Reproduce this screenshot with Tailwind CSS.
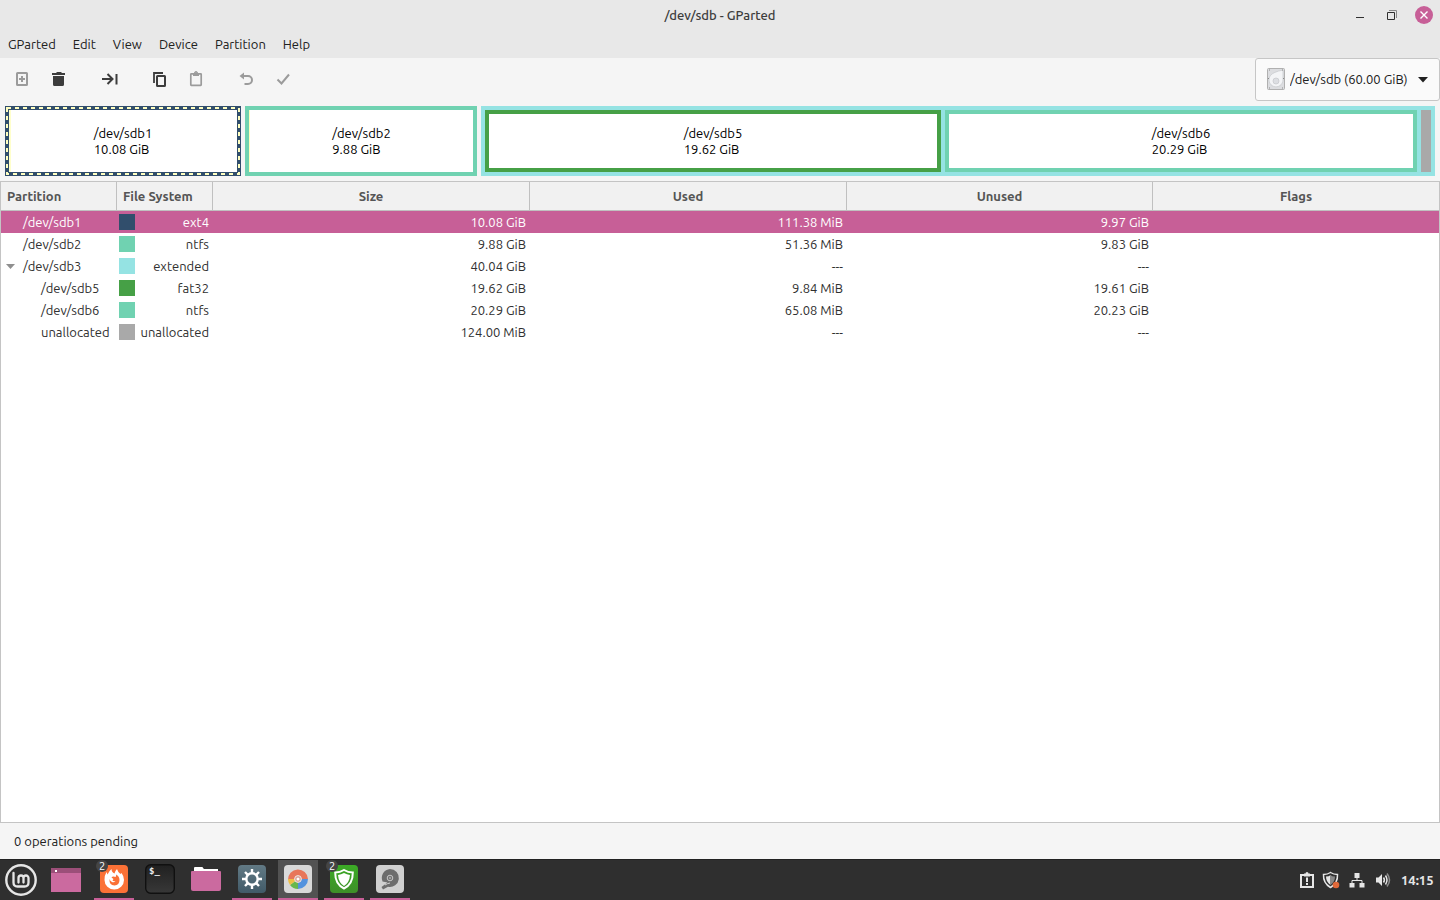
<!DOCTYPE html>
<html lang="en">
<head>
<meta charset="utf-8">
<title>/dev/sdb - GParted</title>
<script src="https://cdn.jsdelivr.net/npm/@tailwindcss/browser@4"></script>
</head>
<body class="flex h-screen flex-col overflow-hidden bg-[#f5f5f5] font-['Ubuntu','Noto_Sans',sans-serif] text-[13px] leading-4 text-[#202020]">

<header class="grid h-[30px] shrink-0 grid-cols-[1fr_auto_1fr] items-center bg-[#e8e8e8]">
  <span></span>
  <h1 class="font-medium text-[#3c3c3c]">/dev/sdb - GParted</h1>
  <div class="flex items-center justify-end gap-[14px] pr-[7px]">
    <button aria-label="Minimize" class="h-[18px] w-[18px]"><svg viewBox="0 0 18 18" class="block"><path d="M5 11.500h8" stroke="#303030" fill="none"/></svg></button>
    <button aria-label="Restore" class="h-[18px] w-[18px]"><svg viewBox="0 0 18 18" class="block"><path d="M6 4.500h7.500V12" stroke="#8a8a8a" fill="none"/><path d="M4.500 6.500h7v7h-7z" stroke="#303030" fill="none"/></svg></button>
    <button aria-label="Close" class="h-[18px] w-[18px] rounded-full bg-[#c75f97]"><svg viewBox="0 0 18 18" class="block"><path d="M5.500 5.500l7 7m0-7l-7 7" stroke="#fff" stroke-width="1.400" fill="none"/></svg></button>
  </div>
</header>

<nav class="flex h-7 shrink-0 items-center gap-[17px] bg-[#e8e8e8] px-2">
  <button>GParted</button><button>Edit</button><button>View</button><button>Device</button><button>Partition</button><button>Help</button>
</nav>

<div class="flex h-[43px] shrink-0 items-center justify-between pl-[14px]">
  <div class="flex items-center gap-5 pb-0.5 text-[#3c3c3c]">
    <button aria-label="New" class="text-[#9b9b9b]"><svg width="16" height="16" viewBox="0 0 16 16" fill="none" stroke="currentColor" stroke-width="2"><rect x="3" y="2" width="10" height="12" rx=".5"/><path d="M5 8h6M8 5v6"/></svg></button>
    <button aria-label="Delete"><svg width="17" height="16" viewBox="0 0 17 16" fill="currentColor"><path d="M2 2h4l1-1h4l1 1h3v2H2zM3 5h11v8.500q0 1.500-1.500 1.500h-8Q3 15 3 13.500z"/></svg></button>
    <button aria-label="Resize/Move" class="ml-[14px]"><svg width="17" height="16" viewBox="0 0 17 16" fill="none" stroke="currentColor" stroke-width="2"><path d="M1 8h10M6.500 3l5 5-5 5M15.500 3v10.500"/></svg></button>
    <button aria-label="Copy" class="ml-[14px]"><svg width="16" height="16" viewBox="0 0 16 16" fill="none" stroke="currentColor" stroke-width="2"><path d="M2 12V2h9" stroke-width="1.800"/><rect x="5" y="5" width="8" height="10" rx=".5"/></svg></button>
    <button aria-label="Paste" class="text-[#9b9b9b]"><svg width="16" height="16" viewBox="0 0 16 16" fill="none" stroke="currentColor" stroke-width="1.700"><rect x="2.800" y="2.800" width="10.400" height="11.500" rx=".5"/><path d="M5 2h1.500a1.700 1.700 0 0 1 3 0H11v3H5z" fill="currentColor" stroke="none"/><circle cx="8" cy="2" r="1.500" stroke-width="1"/></svg></button>
    <button aria-label="Undo" class="ml-[14px] text-[#9b9b9b]"><svg width="16" height="16" viewBox="0 0 16 16" fill="none" stroke="currentColor" stroke-width="2"><path d="M4 5h6a4 4 0 0 1 0 8H6.500"/><path d="M6 1.500V8.500L1.500 5z" fill="currentColor" stroke="none"/></svg></button>
    <button aria-label="Apply" class="text-[#9b9b9b]"><svg width="18" height="16" viewBox="0 0 18 16" fill="none" stroke="currentColor" stroke-width="2"><path d="M3.500 8.500l4 4 7.500-9"/></svg></button>
  </div>
  <div class="relative h-[43px] w-[185px]">
    <select aria-label="Device" class="block h-full w-full appearance-none rounded-[3px] border border-[#c6c6c6] bg-[#fafafa] pr-6 pb-0.5 pl-[34px]"><option>/dev/sdb (60.00 GiB)</option></select>
    <svg class="pointer-events-none absolute top-[10px] left-[11px]" width="20" height="22" viewBox="0 0 20 22"><rect x="1.500" y=".5" width="17" height="21" rx="1" fill="#dcdde0" stroke="#b0b0b0"/><path d="M17 2v10a7 7 0 1 1-12.500-4.500Q7 4 17 2z" fill="#f3f4f6" stroke="#c6c8cc" stroke-width=".7"/><circle cx="10" cy="13" r="3" fill="#dcdee2" stroke="#c4c6ca" stroke-width=".7"/><path d="M3 2h1M16 2h1M3 20h1M16 20h1M2 10.500h1M17 10.500h1" stroke="#8b8b8b"/></svg>
    <svg class="pointer-events-none absolute top-[19px] right-3" width="10" height="6" viewBox="0 0 10 6"><path d="M0 0h10L5 5.500z" fill="#202020"/></svg>
  </div>
</div>

<section aria-label="Partition layout" class="mx-[5px] mt-[5px] flex h-[70px] shrink-0 gap-1 text-black">
  <div class="relative flex flex-[228] items-center justify-center border-4 border-[#314e6c] bg-white">
    <svg class="absolute -inset-0.5 h-[66px] w-[calc(100%+4px)] overflow-visible" fill="none"><path d="M3 2v62" stroke="#ffffcc" stroke-width="2"/><rect width="100%" height="100%" stroke="#ffffc0" stroke-width="2" stroke-dasharray="4 4"/></svg>
    <p>/dev/sdb1<br>10.08 GiB</p>
  </div>
  <div class="flex flex-[224] items-center border-4 border-[#70d2b1] bg-white"><i class="h-full w-px bg-[#ffffc0]"></i><p class="mx-auto">/dev/sdb2<br>9.88 GiB</p></div>
  <div class="flex flex-[946] gap-1 border-4 border-[#95e3e3] bg-[#95e3e3]">
    <div class="flex flex-[448] items-center justify-center border-4 border-[#46a046] bg-white"><p>/dev/sdb5<br>19.62 GiB</p></div>
    <div class="flex flex-[464] items-center justify-center border-4 border-[#70d2b1] bg-white"><p>/dev/sdb6<br>20.29 GiB</p></div>
    <div class="w-[10px] bg-[#a9a9a9]"></div>
  </div>
</section>

<main class="mt-[5px] min-h-0 flex-1 border border-[#c4c4c4] bg-white">
  <table class="w-full table-fixed border-separate border-spacing-0 text-right text-[#303030]">
    <colgroup><col class="w-[116px]"><col class="w-[96px]"><col class="w-[317px]"><col class="w-[317px]"><col class="w-[306px]"><col></colgroup>
    <thead>
      <tr class="h-[29px] bg-[#f1f1f1] text-center text-[#555]">
        <th class="border-r border-b border-[#c0c0c0] pl-1.5 text-left">Partition</th>
        <th class="border-r border-b border-[#c0c0c0] pl-1.5 text-left whitespace-nowrap">File System</th>
        <th class="border-r border-b border-[#c0c0c0]">Size</th>
        <th class="border-r border-b border-[#c0c0c0]">Used</th>
        <th class="border-r border-b border-[#c0c0c0]">Unused</th>
        <th class="border-b border-[#c0c0c0]">Flags</th>
      </tr>
    </thead>
    <tbody>
      <tr class="h-[22px] bg-[#c75f97] text-white">
        <td class="pl-[22px] text-left">/dev/sdb1</td>
        <td class="pr-1 pl-0.5"><div class="flex items-center justify-between"><i class="h-4 w-4 shrink-0 bg-[#314e6c]"></i>ext4</div></td>
        <td class="pr-1">10.08 GiB</td><td class="pr-1">111.38 MiB</td><td class="pr-1">9.97 GiB</td><td></td>
      </tr>
      <tr class="h-[22px]">
        <td class="pl-[22px] text-left">/dev/sdb2</td>
        <td class="pr-1 pl-0.5"><div class="flex items-center justify-between"><i class="h-4 w-4 shrink-0 bg-[#70d2b1]"></i>ntfs</div></td>
        <td class="pr-1">9.88 GiB</td><td class="pr-1">51.36 MiB</td><td class="pr-1">9.83 GiB</td><td></td>
      </tr>
      <tr class="h-[22px]">
        <td class="pl-[5px] text-left"><div class="flex items-center gap-2"><svg width="9" height="5" viewBox="0 0 9 5"><path d="M0 0h9L4.500 5z" fill="#8f8f8f"/></svg>/dev/sdb3</div></td>
        <td class="pr-1 pl-0.5"><div class="flex items-center justify-between"><i class="h-4 w-4 shrink-0 bg-[#95e3e3]"></i>extended</div></td>
        <td class="pr-1">40.04 GiB</td><td class="pr-1">---</td><td class="pr-1">---</td><td></td>
      </tr>
      <tr class="h-[22px]">
        <td class="pl-10 text-left">/dev/sdb5</td>
        <td class="pr-1 pl-0.5"><div class="flex items-center justify-between"><i class="h-4 w-4 shrink-0 bg-[#46a046]"></i>fat32</div></td>
        <td class="pr-1">19.62 GiB</td><td class="pr-1">9.84 MiB</td><td class="pr-1">19.61 GiB</td><td></td>
      </tr>
      <tr class="h-[22px]">
        <td class="pl-10 text-left">/dev/sdb6</td>
        <td class="pr-1 pl-0.5"><div class="flex items-center justify-between"><i class="h-4 w-4 shrink-0 bg-[#70d2b1]"></i>ntfs</div></td>
        <td class="pr-1">20.29 GiB</td><td class="pr-1">65.08 MiB</td><td class="pr-1">20.23 GiB</td><td></td>
      </tr>
      <tr class="h-[22px]">
        <td class="pl-10 text-left">unallocated</td>
        <td class="pr-1 pl-0.5"><div class="flex items-center justify-between"><i class="h-4 w-4 shrink-0 bg-[#a9a9a9]"></i>unallocated</div></td>
        <td class="pr-1">124.00 MiB</td><td class="pr-1">---</td><td class="pr-1">---</td><td></td>
      </tr>
    </tbody>
  </table>
</main>

<p class="flex h-9 shrink-0 items-center px-[14px]">0 operations pending</p>

<footer class="flex h-[41px] shrink-0 items-stretch justify-between border-t border-[#222] bg-[#2f2f2f] text-white">
  <div class="flex">
    <button aria-label="Menu" class="ml-[5px] flex w-8 items-center justify-center">
      <svg width="32" height="32" viewBox="0 0 32 32" fill="none" stroke="#e6e6e6"><circle cx="16" cy="16" r="14.700" stroke-width="2.400"/><path d="M8.500 9v9.500q0 4 4 4h7q4 0 4-4V14a2.500 2.500 0 0 0-5 0v4.500M18.500 14a2.500 2.500 0 0 0-5 0v4.500" stroke-width="2.300" stroke-linecap="round"/></svg>
    </button>
    <button aria-label="Show desktop" class="ml-[9px] flex w-10 items-center justify-center">
      <svg width="30" height="24" viewBox="0 0 30 24"><path d="M0 0h30v24H0z" fill="#cb6a9f"/><path d="M0 0h30v5H0z" fill="#9c4f79"/><path d="M4 2h2v2H4z" fill="#fff"/></svg>
    </button>
    <div class="ml-2 flex gap-1.5">
      <button aria-label="Firefox, 2 windows" class="relative flex w-10 items-center justify-center border-b-2 border-[#c75f97]">
        <svg width="28" height="28" viewBox="0 0 28 28"><rect width="28" height="28" rx="4" fill="#fb7136"/><path d="M4.500 15Q4.500 10 6.500 7l1 2.500Q9 6 11.500 4q0 3 3 4.500Q15 6 17 4q.5 2.500 3.500 5l1-1Q24 11 24 15a9.700 9.500 0 0 1-19.500 0z" fill="#fff"/><path d="M9.500 14q-.5 6 5 6.500 5-.5 5-5.500 0-4-3.500-5.500.5 1.500-.5 2.500-3-1-4 .5l2 1.500-1 1.500q1 1 3 .5-1.500 2-3.500 1Q10 16 9.500 14z" fill="#fb7136"/></svg>
        <span class="absolute top-0 left-0.5 h-3 w-3 rounded-full bg-[#454545] text-center text-[11px] leading-3">2</span>
      </button>
      <button aria-label="Terminal" class="flex w-10 items-center justify-center pb-0.5">
        <svg width="30" height="30" viewBox="0 0 30 30"><defs><linearGradient id="term" x2="0" y2="1"><stop stop-color="#202020"/><stop offset="1" stop-color="#383838"/></linearGradient></defs><rect x=".7" y=".7" width="28.600" height="28.600" rx="5" fill="url(#term)" stroke="#101010" stroke-width="1.400"/><text x="4" y="10" font-family="DejaVu Sans Mono, monospace" font-size="9" font-weight="bold" fill="#eee">$_</text></svg>
      </button>
      <button aria-label="Files" class="flex w-10 items-center justify-center pb-0.5">
        <svg width="30" height="26" viewBox="0 0 30 26"><path d="M3 5V2q0-1 1-1h7q1 0 1 1l1 1h14v4H3z" fill="#fff"/><path d="M0 6q0-1 1-1h28q1 0 1 1v17q0 2-2 2H2q-2 0-2-2z" fill="#cb6a9f"/></svg>
      </button>
      <button aria-label="System settings" class="flex w-10 items-center justify-center border-b-2 border-[#c75f97]">
        <svg width="28" height="28" viewBox="0 0 28 28"><defs><linearGradient id="set" x2="0" y2="1"><stop stop-color="#627a85"/><stop offset="1" stop-color="#415a68"/></linearGradient></defs><rect width="28" height="28" rx="4" fill="url(#set)"/><g stroke="#fff" fill="none"><circle cx="14" cy="14" r="5.700" stroke-width="2.400"/><path d="M14 4v4M14 20v4M4 14h4M20 14h4M7 7l2.800 2.800M18.200 18.200L21 21M21 7l-2.800 2.800M9.800 18.200L7 21" stroke-width="2.400"/></g></svg>
      </button>
      <button aria-label="GParted" class="flex w-10 items-center justify-center border-b-2 border-[#c75f97] bg-[#525252]">
        <svg width="28" height="28" viewBox="0 0 28 28"><rect width="28" height="28" rx="4" fill="#d9d9d9"/><path d="M14 14L4 15A10 10 0 0 1 24 14z" fill="#e8765a"/><path d="M14 14h10a10 10 0 0 1-10 10z" fill="#5392de"/><path d="M14 14v10a10 10 0 0 1-8-4z" fill="#67b74d"/><path d="M14 14l-8 6a10 10 0 0 1-2-6z" fill="#eebe45"/><circle cx="14" cy="14" r="3.400" fill="#d9a095" stroke="#f2e7e4" stroke-width="1"/><circle cx="14" cy="14" r="1.500" fill="#fff"/></svg>
      </button>
      <button aria-label="Update manager, 2 windows" class="relative flex w-10 items-center justify-center border-b-2 border-[#c75f97]">
        <svg width="28" height="28" viewBox="0 0 28 28"><defs><linearGradient id="shd" x2="0" y2="1"><stop stop-color="#3cab26"/><stop offset="1" stop-color="#3d8f28"/></linearGradient></defs><rect width="28" height="28" rx="4" fill="url(#shd)"/><path d="M14 5q4 2.500 8.800 2.500Q23 19 14 23.500 5 19 5.200 7.500 10 7.500 14 5z" fill="none" stroke="#fff" stroke-width="2"/><path d="M14 8q3 1.700 6 2-.5 7.500-6 11-5.500-3.500-6-11 3-.3 6-2z" fill="#fff"/></svg>
        <span class="absolute top-0 left-0.5 h-3 w-3 rounded-full bg-[#454545] text-center text-[11px] leading-3">2</span>
      </button>
      <button aria-label="Disks" class="flex w-10 items-center justify-center border-b-2 border-[#c75f97]">
        <svg width="28" height="28" viewBox="0 0 28 28"><rect width="28" height="28" rx="4" fill="#d0d0d0"/><path d="M14 4a9 9 0 1 1-2 17.800L7 24.500 5.500 22l6-4.500-5-1A9 9 0 0 1 14 4z" fill="#6d6d6d"/><path d="M9 20q2-1.500 5-2" fill="none" stroke="#d0d0d0"/><circle cx="14" cy="13" r="2.800" fill="#757575" stroke="#c8c8c8"/><circle cx="14" cy="13" r="1" fill="#b0b0b0"/></svg>
      </button>
    </div>
  </div>
  <div class="flex items-center gap-[9px] pr-[5px]">
    <svg width="16" height="18" viewBox="0 0 16 18" class="-mr-0.5" fill="none" stroke="#e6e6e6"><rect x="2" y="4" width="12" height="12" stroke-width="2"/><path d="M5 2.500h1.500a1.500 1.500 0 0 1 3 0H11v3H5z" fill="#e6e6e6" stroke="none"/><path d="M8 6.500v4.500M8 12v2" stroke-width="2"/></svg>
    <svg width="18" height="18" viewBox="0 0 18 18"><path d="M8.500 1.500q3 2 7 2Q16 12 8.500 16.500 1 12 1.500 3.500q4 0 7-2z" fill="none" stroke="#e6e6e6" stroke-width="1.500"/><path d="M8.500 4v10Q4 11 4 5.500 7 5.500 8.500 4z" fill="#e6e6e6"/><path d="M8.500 4v10Q13 11 13 5.500 10 5.500 8.500 4z" fill="#888"/><circle cx="14" cy="14" r="3.300" fill="#e0693a"/></svg>
    <svg width="16" height="16" viewBox="0 0 16 16"><path d="M5.500 1h5v5h-5zM.5 11h5v4.500h-5zM10.500 11h5v4.500h-5z" fill="#e6e6e6"/><path d="M8 5v3.500M3 12V8.500h10V12" fill="none" stroke="#e6e6e6"/></svg>
    <svg width="18" height="16" viewBox="0 0 18 16" fill="none"><path d="M2 5.500h2.500L8 2v12l-3.500-3.500H2z" fill="#e6e6e6"/><path d="M9.500 5.500q1.800 2.500 0 5M11.500 3.500q3 4.500 0 9" stroke="#e6e6e6" stroke-width="1.500"/><path d="M13 1.500q5 6.500 0 13" stroke="#8b8b8b" stroke-width="1.500"/></svg>
    <time class="min-w-[34px] font-bold text-[#e6e6e6]">14:15</time>
  </div>
</footer>
</body>
</html>
